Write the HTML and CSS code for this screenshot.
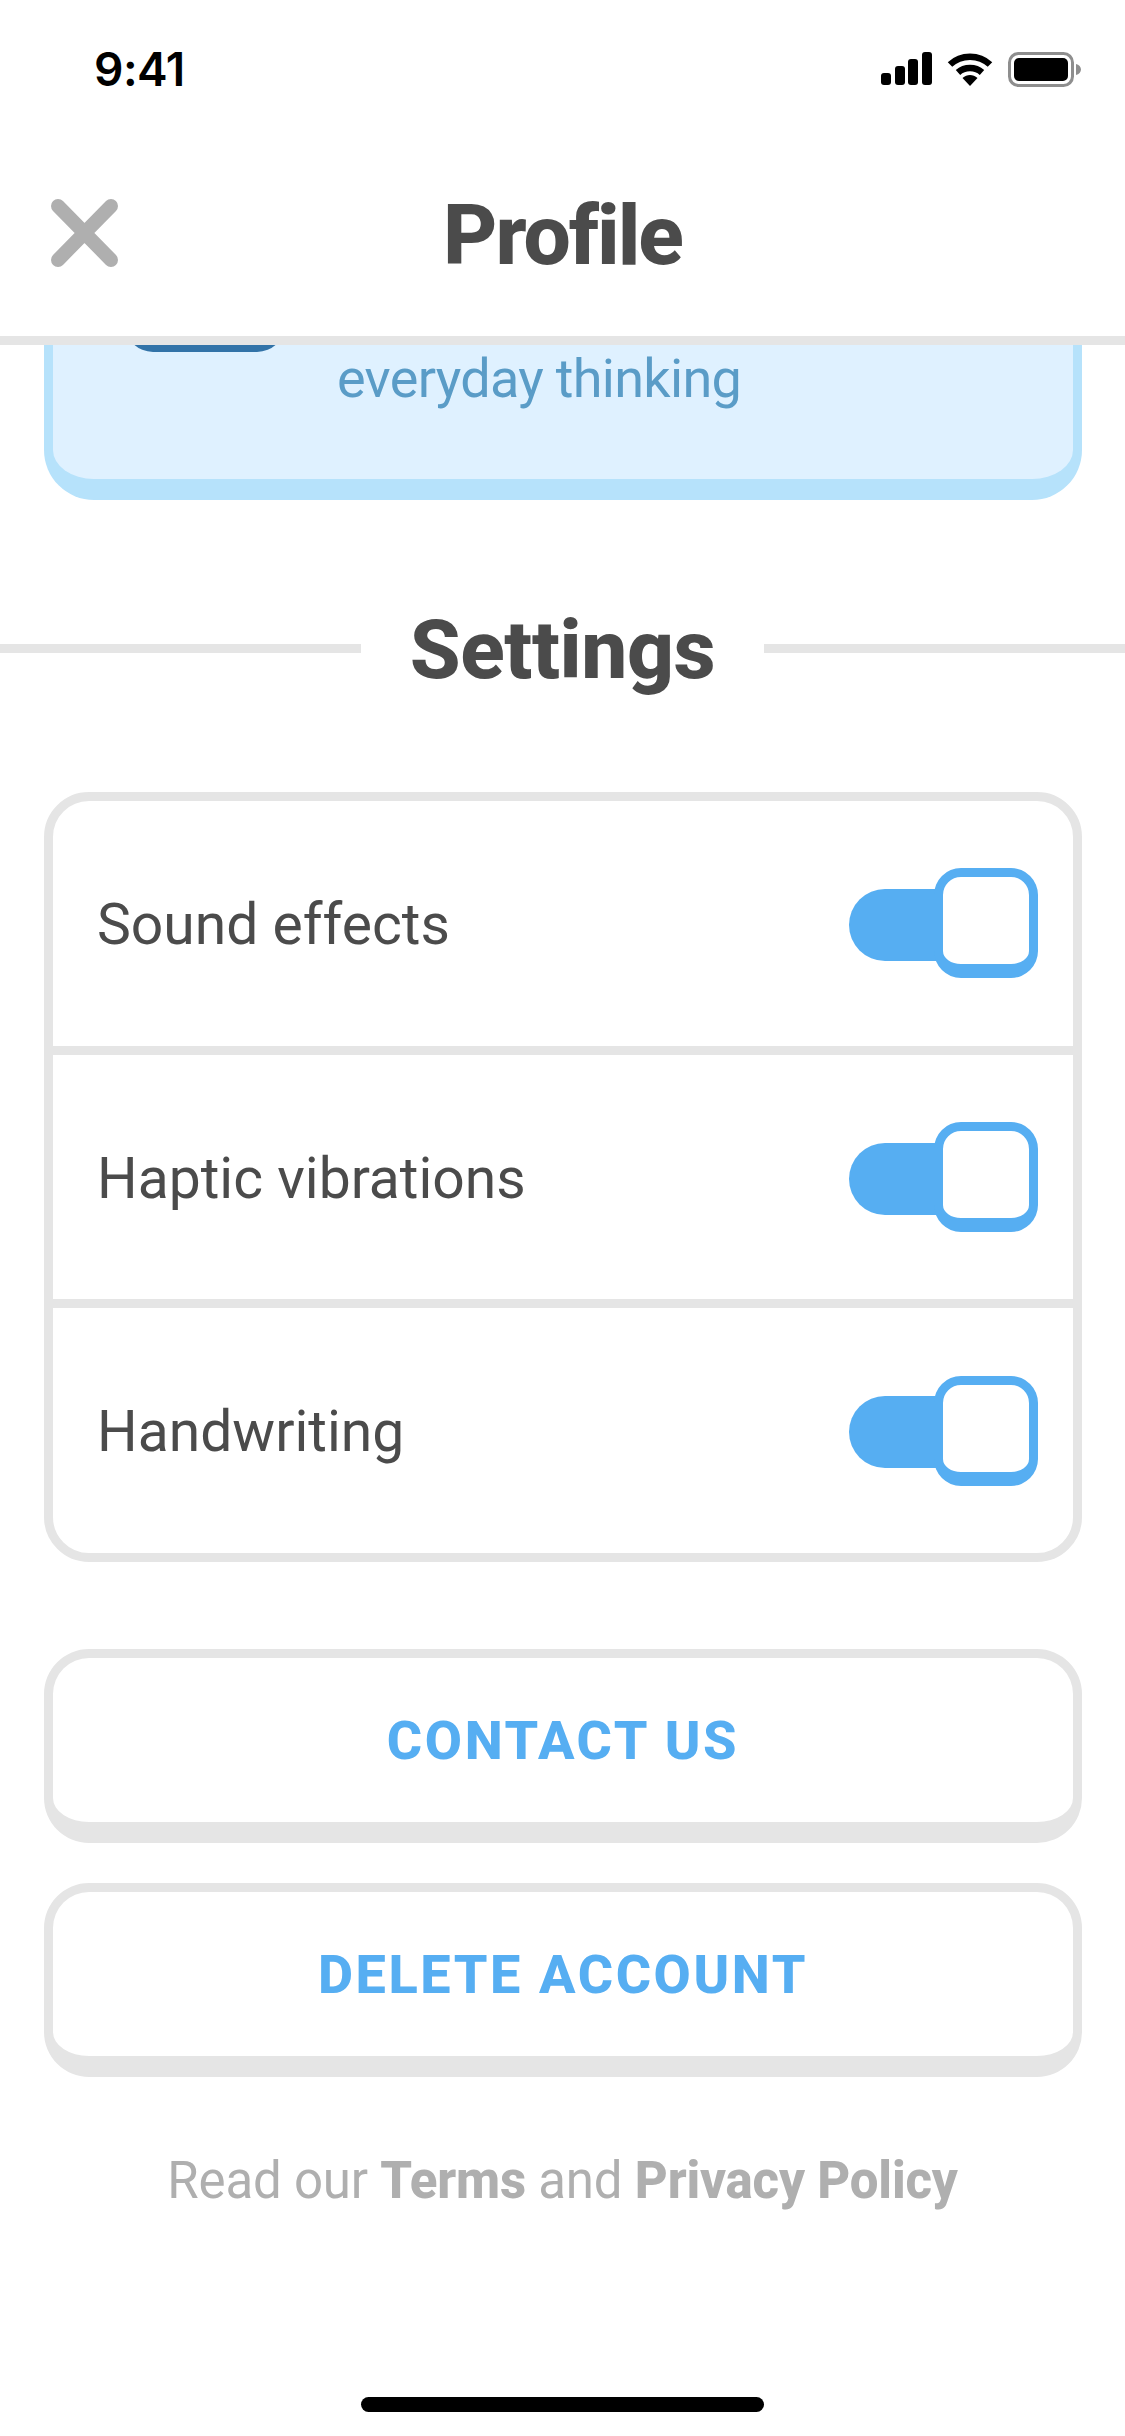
FILE: index.html
```html
<!DOCTYPE html>
<html lang="en">
<head>
    <meta charset="UTF-8">
    <meta name="viewport" content="width=device-width, initial-scale=1.0">
    <title>Profile</title>
    <link rel="stylesheet" href="styles.css">
</head>
<body>
    <div class="page">
        <div class="status-bar">
            <span class="time">9:41</span>
            <div class="status-icons">
                <svg width="51" height="33" viewBox="0 0 51 33">
                    <rect x="0" y="21" width="10" height="12" rx="3"/>
                    <rect x="14" y="14" width="10" height="19" rx="3"/>
                    <rect x="27" y="7" width="10" height="26" rx="3"/>
                    <rect x="41" y="0" width="10" height="33" rx="3"/>
                </svg>
                <svg class="wifi" width="46" height="34" viewBox="0 0 46 34">
                    <path d="M3 12.5C14 2 32 2 43 12.5" fill="none" stroke="#000" stroke-width="6.5"/>
                    <path d="M11 20.5C17.500 14.500 28.500 14.500 35 20.500" fill="none" stroke="#000" stroke-width="6.500"/>
                    <path d="M15.500 26C20 22 26 22 30.500 26L23 34Z"/>
                </svg>
                <svg width="74" height="35" viewBox="0 0 74 35">
                    <rect x="1.500" y="1.500" width="63" height="32" rx="9" fill="none" stroke="#8e8e8e" stroke-width="3"/>
                    <rect x="6" y="6" width="54" height="23" rx="5"/>
                    <path d="M68 12C71 12.500 73 15 73 17.500C73 20 71 22.500 68 23Z" fill="#8e8e8e"/>
                </svg>
            </div>
        </div>

        <header class="top-bar">
            <svg class="close-icon" width="67" height="68" viewBox="0 0 67 68">
                <path d="M7 7L60 61M60 7L7 61" fill="none" stroke="#afafaf" stroke-width="14" stroke-linecap="round"/>
            </svg>
            <h1>Profile</h1>
            <span></span>
        </header>

        <div class="course-card">
            <div class="course-badge"></div>
            <p>everyday thinking</p>
        </div>

        <div class="section-title">
            <h2>Settings</h2>
        </div>

        <div class="settings">
            <div class="setting-row">
                <span>Sound effects</span>
                <div class="toggle"><div class="track"></div><div class="thumb"></div></div>
            </div>
            <div class="setting-row">
                <span>Haptic vibrations</span>
                <div class="toggle"><div class="track"></div><div class="thumb"></div></div>
            </div>
            <div class="setting-row">
                <span>Handwriting</span>
                <div class="toggle"><div class="track"></div><div class="thumb"></div></div>
            </div>
        </div>

        <div class="buttons">
            <div class="btn">CONTACT US</div>
            <div class="btn">DELETE ACCOUNT</div>
        </div>

        <p class="legal">Read our <b>Terms</b> and <b>Privacy Policy</b></p>

        <div class="home-bar"></div>
    </div>
</body>
</html>
```

FILE: styles.css
```css
* {
    box-sizing: border-box;
}
body {
    margin: 0;
    background-color: #fff;
    font-family: Roboto, Arial, sans-serif;
    color: #4b4b4b;
}
.page {
    width: 1125px;
    height: 2436px;
    overflow: hidden;
    display: flex;
    flex-direction: column;
}
.status-bar {
    height: 120px;
    display: flex;
    justify-content: space-between;
    align-items: flex-start;
    padding: 52px 43px 0 94px;
}
.time {
    font-family: Inter, sans-serif;
    font-size: 46px;
    font-weight: 600;
    line-height: 34px;
    color: #000;
    letter-spacing: -0.5px;
}
.status-icons {
    display: flex;
    gap: 15px;
}
.top-bar {
    height: 225px;
    padding: 10px 51px 0;
    border-bottom: 9px solid #e5e5e5;
    display: grid;
    grid-template-columns: 1fr auto 1fr;
    align-items: center;
}
h1 {
    margin: 6px 0 0;
    font-size: 84px;
    font-weight: 800;
    line-height: 90px;
    letter-spacing: -2px;
}
.course-card {
    margin: 0 43px 0 44px;
    height: 155px;
    flex-shrink: 0;
    overflow: hidden;
    background-color: #dff1ff;
    border: 9px solid #b6e2fb;
    border-top: 0;
    border-bottom-width: 21px;
    border-radius: 0 0 50px 50px;
    display: flex;
    align-items: flex-start;
    padding-left: 72px;
}
.course-badge {
    width: 160px;
    height: 40px;
    margin-top: -33px;
    background-color: #3273a8;
    border-radius: 0 0 28px 28px;
}
.course-card p {
    margin: 4px 0 0 52px;
    font-size: 54px;
    line-height: 60px;
    letter-spacing: -0.7px;
    color: #5a9cc7;
}
.section-title {
    margin-top: 100px;
    height: 100px;
    display: flex;
    align-items: center;
    gap: 49px;
}
.section-title::before,
.section-title::after {
    content: "";
    flex: 1;
    height: 9px;
    background-color: #e5e5e5;
    margin-top: -3px;
}
h2 {
    margin: 0;
    font-size: 82px;
    font-weight: 800;
    line-height: 100px;
    letter-spacing: -0.4px;
}
.settings {
    margin: 92px 43px 0 44px;
    border: 9px solid #e5e5e5;
    border-radius: 45px;
    height: 770px;
    flex-shrink: 0;
    display: flex;
    flex-direction: column;
}
.setting-row {
    flex: 1;
    display: flex;
    justify-content: space-between;
    align-items: center;
    padding: 0 35px 0 44px;
    font-size: 57px;
    font-weight: 450;
}
.setting-row span {
    margin-top: 2px;
}
.setting-row + .setting-row {
    border-top: 9px solid #e5e5e5;
}
.toggle {
    display: flex;
    align-items: center;
}
.track {
    width: 90px;
    height: 72px;
    margin-top: 3px;
    background-color: #56aef2;
    border-radius: 36px 0 0 36px;
}
.thumb {
    width: 104px;
    height: 110px;
    margin-left: -5px;
    background-color: #fff;
    border: 9px solid #56aef2;
    border-bottom-width: 14px;
    border-radius: 27px;
}
.buttons {
    margin: 87px 43px 0 44px;
    display: flex;
    flex-direction: column;
    gap: 40px;
}
.btn {
    height: 194px;
    border: 9px solid #e5e5e5;
    border-bottom-width: 21px;
    border-radius: 45px;
    display: flex;
    align-items: center;
    justify-content: center;
    font-size: 54px;
    font-weight: 800;
    letter-spacing: 2.6px;
    color: #56aef2;
}
.legal {
    margin: 74px 0 0;
    text-align: center;
    font-size: 51px;
    font-weight: 450;
    line-height: 60px;
    letter-spacing: -0.2px;
    color: #afafaf;
}
.legal b {
    font-weight: 800;
}
.home-bar {
    width: 403px;
    height: 15px;
    margin: auto auto 24px;
    background-color: #000;
    border-radius: 8px;
}
```
